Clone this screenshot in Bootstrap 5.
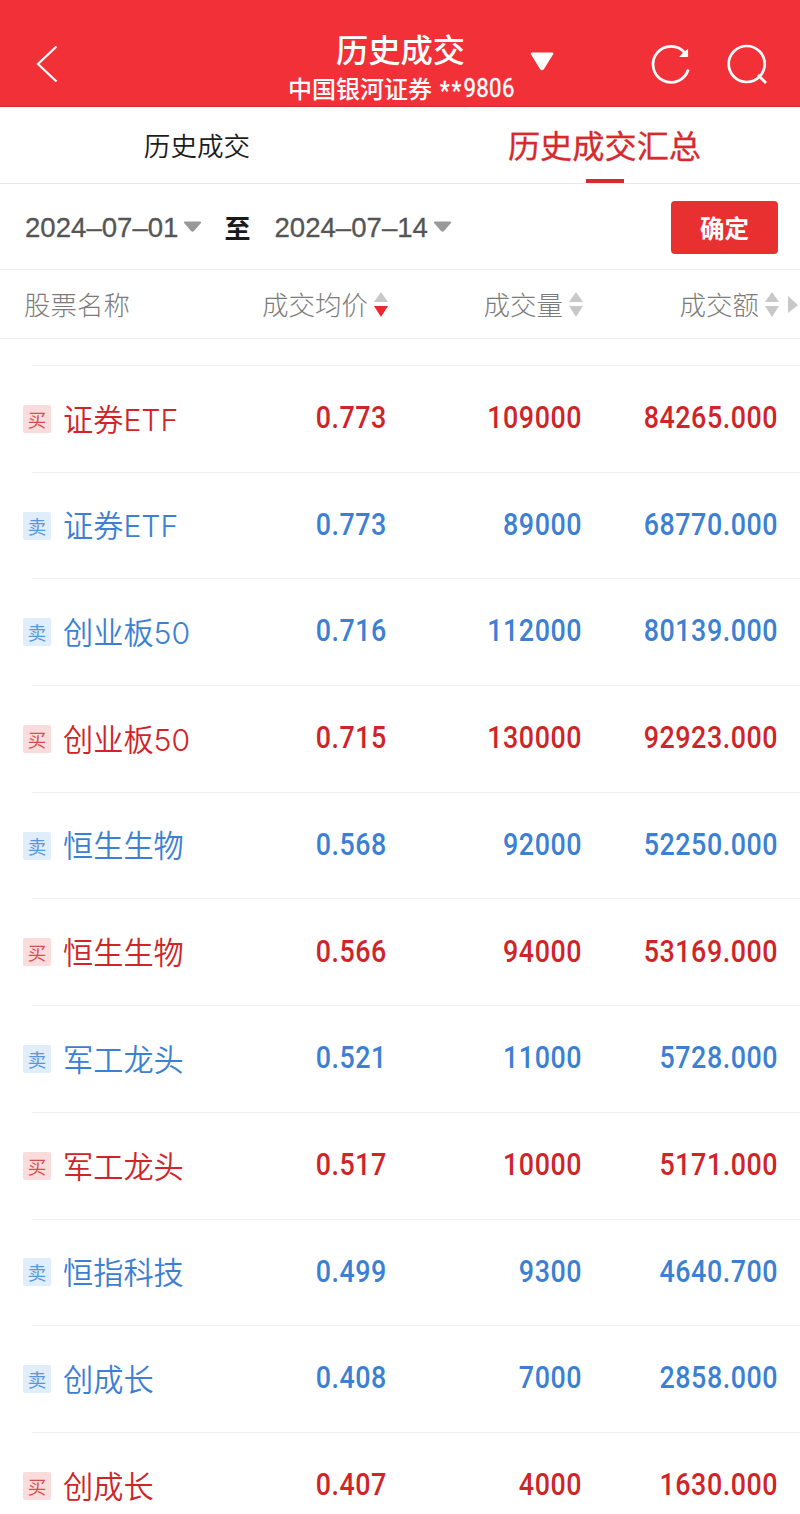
<!DOCTYPE html>
<html lang="zh-CN">
<head>
<meta charset="utf-8">
<meta name="viewport" content="width=device-width, initial-scale=1">
<title>历史成交</title>
<link href="https://cdn.jsdelivr.net/npm/bootstrap@5.3.0/dist/css/bootstrap.min.css" rel="stylesheet">
<style>
  body { font-family: "Noto Sans CJK SC", sans-serif; background: #fff; overflow: hidden; height: 1514px; line-height: 1; }
  .topbar { height: 107px; background: #f23038; border-bottom: 1px solid #d92a31; color: #fff; display: grid; grid-template-columns: 288px 228px 1fr; }
  .topbar svg { display: block; }
  .title-main { font-size: 32.3px; font-weight: 500; line-height: 34px; padding-top: 31px; margin-left: -3px; }
  .title-sub { font-size: 24px; font-weight: 500; line-height: 28px; margin-top: 9px; }
  .acct { display: inline-block; font-family: Roboto, sans-serif; font-size: 25.5px; font-weight: 400; -webkit-text-stroke: .4px #fff; transform: scaleX(.87); transform-origin: left; letter-spacing: .4px; }
  .acct i { font-style: normal; vertical-align: -3px; letter-spacing: 2.5px; }
  .tabs { height: 77px; border-bottom: 1px solid #e9e9e9; }
  .tab-plain { width: 394px; font-size: 26.6px; font-weight: 350; color: #1c1c1c; padding-top: 1px; }
  .tab-on { width: 421px; margin-right: -15px; font-size: 32.2px; color: #d62a2d; -webkit-text-stroke: .3px #d62a2d; padding-bottom: 1px; }
  .tab-on::after { content: ""; position: absolute; left: 192px; bottom: 0; width: 38px; height: 4px; background: #d42c30; }
  .range { height: 86px; border-bottom: 1px solid #ebebeb; padding: 1px 22px 0 25px; }
  .date { font-family: "Liberation Sans", sans-serif; font-size: 27.6px; color: #555; -webkit-text-stroke: .3px #555; padding-top: 2px; }
  .to { font-size: 26px; font-weight: 700; color: #1a1a1a; }
  .btn-go { width: 107px; height: 53px; border-radius: 4px; background: #e93030; color: #fff; font-size: 24.5px; font-weight: 700; padding: 0; border: 0; line-height: 53px; }
  .cols { display: grid; grid-template-columns: 388px 195px 196px 1fr; align-items: center; }
  .heads { height: 69px; border-bottom: 1px solid #ebebeb; font-size: 26.5px; font-weight: 300; color: #7c7c7c; }
  .heads > div { padding-top: 1px; }
  .heads svg { margin-left: 6px; }
  .lead-gap { height: 26px; }
  .deal { height: 106.7px; position: relative; }
  .deal::before { content: ""; position: absolute; top: 0; left: 32px; right: 0; height: 1px; background: #f0f0f0; }
  .side { width: 28px; height: 28px; border-radius: 2px; font-size: 18.5px; line-height: 28px; text-align: center; margin-right: 12px; margin-top: 1px; }
  .stock { font-family: Inter, "Noto Sans CJK SC", sans-serif; font-size: 30.2px; font-weight: 350; padding-top: 3px; }
  .num { font-family: Roboto, sans-serif; font-weight: 500; font-size: 30.5px; text-align: right; letter-spacing: .6px; transform: scaleX(.88); transform-origin: right; }
  .deal .num { margin-right: 1px; }
  .buy { color: #cf2428; } .buy .side { background: #fbdcdd; color: #d94a4e; }
  .sell { color: #3c80d3; } .sell .side { background: #e0edfa; color: #5797de; }
</style>
</head>
<body>
<header class="topbar">
  <div class="d-flex" style="padding:46px 0 0 36px"><svg width="22" height="38" fill="none" stroke="#fff" stroke-width="2.2"><path d="M20.500 .5L2 18L20.500 35.500"/></svg></div>
  <div class="text-center text-nowrap">
    <div class="title-main">历史成交</div>
    <div class="title-sub d-flex justify-content-start">中国银河证券<span class="acct ms-2"><i>**</i>9806</span></div>
  </div>
  <div class="d-flex">
    <svg width="284" height="106">
      <path d="M16 52.500H36Q38 52.500 37 54.500L28 69Q26 71.500 24 69L15 54.500Q14 52.500 16 52.500Z" fill="#fff"/>
      <g fill="none" stroke="#fff" stroke-width="2.700">
        <path d="M172.300 69.500A18 18 0 1 1 169 53"/><path d="M171.500 50V56.500H164.500L167 53.500Z" fill="#fff" stroke-width="1.200"/>
        <circle cx="230.700" cy="64" r="18"/><path d="M242 75L250 83"/>
      </g>
    </svg>
  </div>
</header>
<nav class="tabs d-flex">
  <div class="tab-plain d-flex align-items-center justify-content-center">历史成交</div>
  <div class="tab-on position-relative d-flex align-items-center justify-content-center">历史成交汇总</div>
</nav>
<section class="range d-flex align-items-center">
  <span class="date">2024–07–01</span>
  <svg style="margin-left:5px" width="20" height="12"><path d="M2 .5H17Q19 .5 17.500 2.500L11 10Q9.500 11.500 8 10L1.500 2.500Q0 .5 2 .5Z" fill="#999"/></svg>
  <span class="to" style="margin:0 24px 0 21px">至</span>
  <span class="date">2024–07–14</span>
  <svg style="margin-left:5px" width="20" height="12"><path d="M2 .5H17Q19 .5 17.500 2.500L11 10Q9.500 11.500 8 10L1.500 2.500Q0 .5 2 .5Z" fill="#999"/></svg>
  <button class="btn btn-go ms-auto">确定</button>
</section>
<section class="heads cols">
  <div class="d-flex justify-content-between align-items-center" style="padding-left:24px"><span>股票名称</span><span class="d-flex align-items-center">成交均价<svg width="14" height="26"><path d="M7 0L14 10H0Z" fill="#c8c8c8"/><path d="M0 14H14L7 25Z" fill="#e62a2e"/></svg></span></div>
  <div class="d-flex justify-content-end align-items-center">成交量<svg width="14" height="26"><path d="M7 0L14 10H0ZM0 14H14L7 25Z" fill="#c8c8c8"/></svg></div>
  <div class="d-flex justify-content-end align-items-center">成交额<svg width="14" height="26"><path d="M7 0L14 10H0ZM0 14H14L7 25Z" fill="#c8c8c8"/></svg></div>
  <div class="d-flex"><svg width="10" height="18" style="margin-left:9px"><path d="M0 0L10 9L0 17Z" fill="#c8c8c8"/></svg></div>
</section>
<div class="lead-gap"></div>
<main id="deals"></main>
<script src="https://cdn.jsdelivr.net/npm/bootstrap@5.3.0/dist/js/bootstrap.bundle.min.js"></script>
<script>
  const deals = [
    ['buy', '证券ETF', '0.773', '109000', '84265.000'],
    ['sell', '证券ETF', '0.773', '89000', '68770.000'],
    ['sell', '创业板50', '0.716', '112000', '80139.000'],
    ['buy', '创业板50', '0.715', '130000', '92923.000'],
    ['sell', '恒生生物', '0.568', '92000', '52250.000'],
    ['buy', '恒生生物', '0.566', '94000', '53169.000'],
    ['sell', '军工龙头', '0.521', '11000', '5728.000'],
    ['buy', '军工龙头', '0.517', '10000', '5171.000'],
    ['sell', '恒指科技', '0.499', '9300', '4640.700'],
    ['sell', '创成长', '0.408', '7000', '2858.000'],
    ['buy', '创成长', '0.407', '4000', '1630.000']
  ];
  document.getElementById('deals').innerHTML = deals.map(([side, name, price, qty, sum]) => `
    <div class="deal cols ${side}">
      <div class="d-flex align-items-center justify-content-between" style="padding-left:23px">
        <div class="d-flex align-items-center"><span class="side">${side === 'buy' ? '买' : '卖'}</span><span class="stock">${name}</span></div>
        <span class="num">${price}</span>
      </div>
      <div class="num">${qty}</div>
      <div class="num">${sum}</div>
    </div>`).join('');
</script>
</body>
</html>
